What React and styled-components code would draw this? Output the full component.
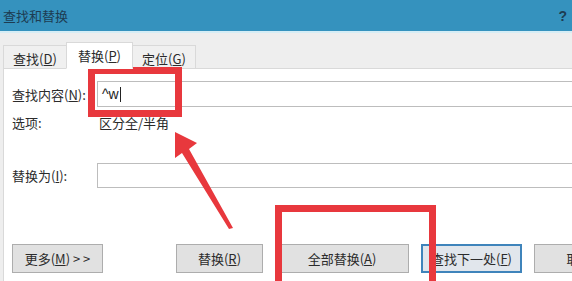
import React from 'react';
import styled, { createGlobalStyle } from 'styled-components';

const GlobalStyle = createGlobalStyle`
  html, body {
    margin: 0;
    padding: 0;
    background: #eeeeee;
  }
  body {
    font-family: "Noto Sans CJK SC", "Liberation Sans", sans-serif;
    font-size: 13px;
    color: #2b2b2b;
  }
`;

const App = () => {
  return (
    <>
      <GlobalStyle />
      <Window>
        <TitleBar>
          <Title>查找和替换</Title>
          <Help>?</Help>
        </TitleBar>
        <TabStrip>
          <Tab>
            查找(<u>D</u>)
          </Tab>
          <Tab active>
            替换(<u>P</u>)
          </Tab>
          <Tab>
            定位(<u>G</u>)
          </Tab>
        </TabStrip>
        <Panel>
          <FieldRow>
            <Label>
              查找内容(<u>N</u>):
            </Label>
            <Input height={26}>
              ^w<Caret />
            </Input>
          </FieldRow>
          <OptionRow>
            <Label>选项:</Label>
            <OptionText>区分全/半角</OptionText>
          </OptionRow>
          <FieldRow spaced>
            <Label>
              替换为(<u>I</u>):
            </Label>
            <Input height={25} />
          </FieldRow>
          <ButtonRow>
            <Button width={91} style={{ marginRight: 61 }}>
              更多(<u>M</u>) &gt; &gt;
            </Button>
            <Button width={87}>
              替换(<u>R</u>)
            </Button>
            <Button width={134}>
              全部替换(<u>A</u>)
            </Button>
            <Button width={101} primary>
              查找下一处(<u>F</u>)
            </Button>
            <Button width={91}>取消</Button>
          </ButtonRow>
        </Panel>
        <Marks viewBox="0 0 572 281" width="572" height="281">
          <rect x="91.5" y="70.5" width="87" height="43" fill="none" stroke="#e8383d" strokeWidth="7" />
          <rect x="278.5" y="208.5" width="154" height="100" fill="none" stroke="#e8383d" strokeWidth="7" />
          <polygon
            points="175,132 197,143 189,149 233,228 229,229 182,153 175,158"
            fill="#e8383d"
          />
        </Marks>
      </Window>
    </>
  );
};

const Window = styled.div`
  position: relative;
  width: 572px;
  height: 281px;
  overflow: hidden;
  background: #eeeeee;
  display: flex;
  flex-direction: column;
`;

const TitleBar = styled.div`
  height: 31px;
  flex-shrink: 0;
  background: #3592be;
  border-bottom: 2px solid #d6edf5;
  display: flex;
  align-items: center;
  justify-content: space-between;
  padding: 0 5px 0 3px;
`;

const Title = styled.span`
  color: #1d3c52;
  font-size: 13px;
`;

const Help = styled.span`
  color: #1d3c52;
  font-family: "Liberation Sans", sans-serif;
  font-weight: bold;
  font-size: 14px;
`;

const TabStrip = styled.div`
  height: 35px;
  flex-shrink: 0;
  display: flex;
  align-items: flex-end;
  padding-left: 3px;
`;

const Tab = styled.div`
  width: ${(p) => (p.active ? 67 : 64)}px;
  height: ${(p) => (p.active ? 27 : 24)}px;
  box-sizing: border-box;
  display: flex;
  align-items: center;
  justify-content: center;
  padding-top: ${(p) => (p.active ? 0 : 2)}px;
  background: ${(p) => (p.active ? '#ffffff' : '#f0f0f0')};
  border: 1px solid #d9d9d9;
  border-bottom: ${(p) => (p.active ? '1px solid #ffffff' : '1px solid #d9d9d9')};
  margin-bottom: -1px;
  margin-right: -1px;
  position: relative;
  z-index: ${(p) => (p.active ? 1 : 0)};
  color: #2b2b2b;
  font-size: 13px;
`;

const Panel = styled.div`
  flex: 1;
  margin-left: 3px;
  background: #ffffff;
  border-top: 1px solid #d9d9d9;
  border-left: 1px solid #d9d9d9;
  padding: 12px 0 0 8px;
  display: flex;
  flex-direction: column;
`;

const FieldRow = styled.div`
  display: flex;
  align-items: center;
  margin-top: ${(p) => (p.spaced ? 33 : 0)}px;
`;

const OptionRow = styled.div`
  display: flex;
  align-items: center;
  height: 16px;
  margin-top: 7px;
`;

const Label = styled.span`
  width: 85px;
  flex-shrink: 0;
  color: #2b2b2b;
  white-space: nowrap;
`;

const OptionText = styled.span`
  margin-left: 2px;
  color: #2b2b2b;
`;

const Input = styled.div`
  flex: 1;
  height: ${(p) => p.height}px;
  box-sizing: border-box;
  border: 1px solid #bdbdbd;
  border-right: none;
  display: flex;
  align-items: center;
  padding-left: 4px;
  font-family: "Liberation Sans", sans-serif;
  font-size: 14px;
  color: #222;
`;

const Caret = styled.span`
  display: inline-block;
  width: 1px;
  height: 15px;
  background: #222;
  margin-left: 1px;
`;

const ButtonRow = styled.div`
  display: flex;
  gap: 12px;
  margin-top: 56px;
`;

const Button = styled.div`
  width: ${(p) => p.width}px;
  height: 29px;
  flex-shrink: 0;
  box-sizing: border-box;
  display: flex;
  align-items: center;
  justify-content: center;
  background: ${(p) => (p.primary ? '#e1e6ec' : '#e1e1e1')};
  border: ${(p) => (p.primary ? '2px solid #3f84bb' : '1px solid #adadad')};
  color: #2b2b2b;
  font-size: 13px;
  white-space: nowrap;
`;

const Marks = styled.svg`
  position: absolute;
  left: 0;
  top: 0;
  pointer-events: none;
`;

export default App;
